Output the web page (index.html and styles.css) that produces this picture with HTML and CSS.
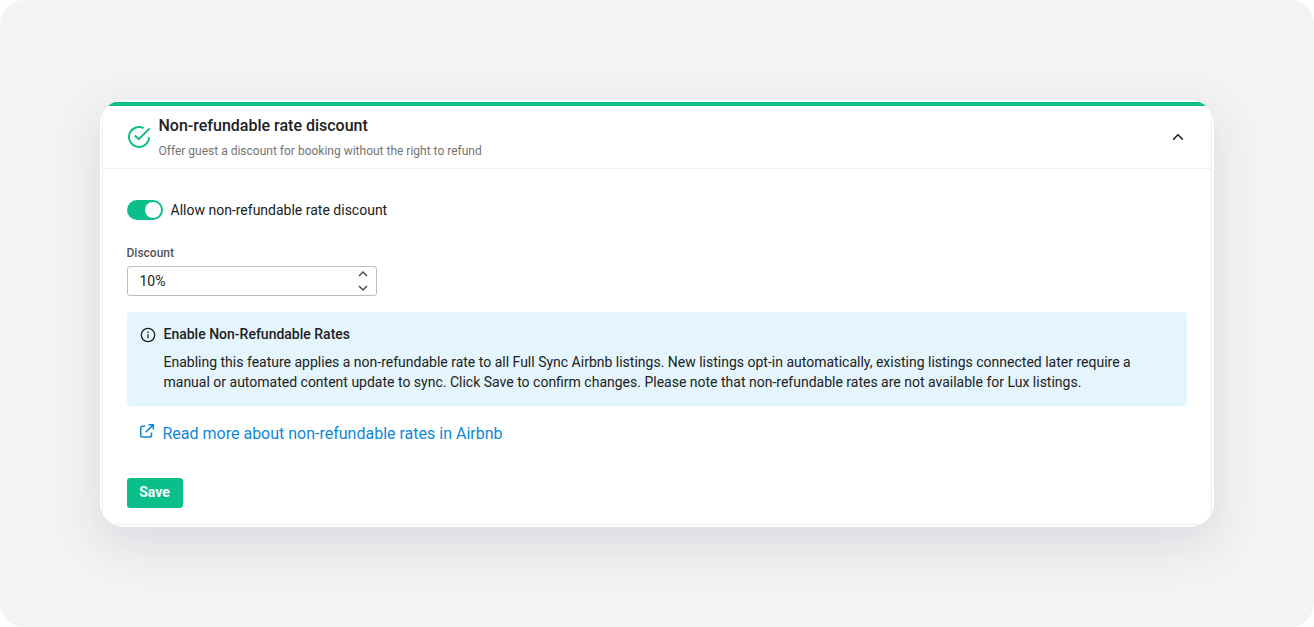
FILE: index.html
```html
<!DOCTYPE html>
<html lang="en">
<head>
    <meta charset="UTF-8">
    <meta name="viewport" content="width=device-width, initial-scale=1.0">
    <title>Non-refundable rate discount</title>
    <link rel="stylesheet" href="styles.css">
</head>
<body>
    <main class="page">
        <div class="card">
            <section class="panel">
                <header class="panel-header">
                    <svg class="check-icon" viewBox="0 0 24 24" width="24" height="24">
                        <path d="M16.6 3.1A10 10 0 1 0 22 12.2"/>
                        <path d="M7.8 10.4l4 3.7L22.6 3.4"/>
                    </svg>
                    <div class="panel-heading">
                        <h1>Non-refundable rate discount</h1>
                        <p>Offer guest a discount for booking without the right to refund</p>
                    </div>
                    <svg class="collapse-icon" viewBox="0 0 12 8" width="12" height="8">
                        <path d="M1.2 6.6L6 1.8l4.8 4.8"/>
                    </svg>
                </header>
                <div class="panel-body">
                    <div class="toggle-row">
                        <span class="toggle"><span class="toggle-knob"></span></span>
                        <span>Allow non-refundable rate discount</span>
                    </div>
                    <div class="field-label">Discount</div>
                    <div class="number-input">
                        <span>10%</span>
                        <span class="spinner">
                            <svg viewBox="0 0 10 6" width="10" height="6"><path d="M1 5l4-4 4 4"/></svg>
                            <svg viewBox="0 0 10 6" width="10" height="6"><path d="M1 1l4 4 4-4"/></svg>
                        </span>
                    </div>
                    <div class="alert">
                        <svg class="info-icon" viewBox="0 0 16 16" width="16" height="16">
                            <circle cx="8" cy="8" r="6.7"/>
                            <path d="M8 7.2v4M8 4.6v1.4"/>
                        </svg>
                        <div>
                            <h2>Enable Non-Refundable Rates</h2>
                            <p>Enabling this feature applies a non-refundable rate to all Full Sync Airbnb listings. New listings opt-in automatically, existing listings connected later require a manual or automated content update to sync. Click Save to confirm changes. Please note that non-refundable rates are not available for Lux listings.</p>
                        </div>
                    </div>
                    <a class="read-more" href="#">
                        <svg viewBox="0 0 16 16" width="16" height="16">
                            <path d="M6.2 3.2H3.4a1.7 1.7 0 0 0-1.7 1.7v7.4a1.7 1.7 0 0 0 1.7 1.7h7.4a1.7 1.7 0 0 0 1.7-1.7V9.4"/>
                            <path d="M9.4 1.7h4.9v4.9M14.1 1.9L6.6 9.2"/>
                        </svg>
                        <span>Read more about non-refundable rates in Airbnb</span>
                    </a>
                    <button class="save" type="button">Save</button>
                </div>
            </section>
        </div>
    </main>
</body>
</html>
```
FILE: styles.css
```css
* { box-sizing: border-box; }
body { font-family: Roboto, Arial, sans-serif; font-size: 14px; line-height: 20px; margin: 0; background: #fff; color: #212121; }
h1, h2, p { margin: 0; }
svg { display: block; flex: none; fill: none; stroke: currentColor; }

.page { height: 627px; padding: 100px; background: #f3f3f3; border-radius: 24px; }
.card { height: 427px; padding: 2px; background: #fff; border-radius: 24px; overflow: hidden; box-shadow: 0 16px 48px rgba(30, 45, 90, 0.12); }
.panel { height: 423px; border: 1px solid #f0f0f0; border-top: 4px solid #0abf8a; }

.panel-header { display: flex; height: 63px; padding: 0 27px 0 24px; border-bottom: 1px solid #f0f0f0; }
.check-icon { margin: 19px 7.5px 0 0; color: #0abf8a; stroke-width: 2; }
.panel-heading { flex: 1; padding-top: 9px; }
.panel-heading h1 { font-size: 16px; line-height: 22px; font-weight: 500; }
.panel-heading p { margin-top: 4px; font-size: 12px; line-height: 20px; color: #757575; }
.collapse-icon { margin-top: 27px; stroke-width: 1.5; }

.panel-body { padding: 31px 24px 0; }
.toggle-row { display: flex; align-items: center; gap: 7.5px; }
.toggle { display: flex; justify-content: flex-end; width: 36px; height: 20px; padding: 2px; border-radius: 10px; background: #0abf8a; }
.toggle-knob { width: 16px; height: 16px; border-radius: 50%; background: #fff; }

.field-label { margin: 25px 0 0 -0.5px; font-size: 12px; line-height: 16px; font-weight: 500; color: #555; }
.number-input { display: flex; align-items: center; justify-content: space-between; width: 250px; height: 30px; margin-top: 5px; padding: 0 8px 0 11.5px; border: 1px solid #bdbdbd; border-radius: 3px; }
.spinner { display: flex; flex-direction: column; gap: 8px; color: #444; }
.spinner svg { stroke-width: 1.4; }

.alert { display: flex; gap: 7.5px; height: 94px; margin-top: 16px; padding: 12px 50px 0 13px; border-radius: 4px; background: #e4f5fd; }
.info-icon { margin-top: 3px; stroke-width: 1.3; }
.alert h2 { font-size: 14px; line-height: 20px; font-weight: 500; }
.alert p { margin-top: 8px; }

.read-more { display: flex; gap: 7.5px; width: fit-content; margin: 16px 0 0 12px; font-size: 16px; line-height: 24px; color: #0f87d4; text-decoration: none; }
.read-more svg { margin-top: 1px; stroke-width: 1.6; }

.save { display: block; width: 56px; height: 30px; margin-top: 32px; padding: 0 1px 1px 0; border: 0; border-radius: 3px; background: #0abf8a; color: #fff; font: bold 14px/29px Roboto, Arial, sans-serif; }
```
